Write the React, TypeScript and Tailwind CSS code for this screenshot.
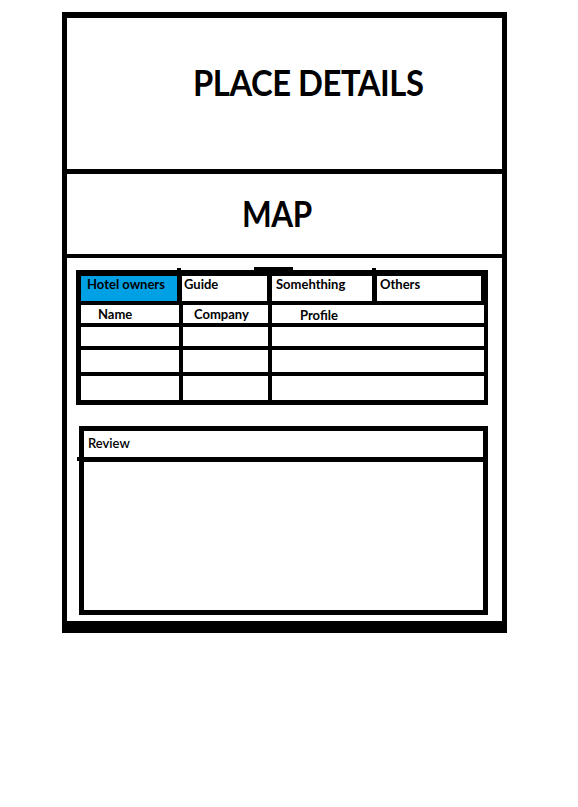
import React from 'react';

const tabs = [
  { label: 'Hotel owners', width: 'w-[96px]', pad: 'pl-[6px]', active: true },
  { label: 'Guide', width: 'w-[85px]', pad: 'pl-[2px]', active: false },
  { label: 'Somehthing', width: 'w-[100px]', pad: 'pl-[4px]', active: false },
  { label: 'Others', width: 'w-[104px]', pad: 'pl-[3px]', active: false },
];

// body rows of the owners table (empty in the sketch)
const rowHeights = ['h-[19px]', 'h-[22px]', 'h-[24px]'];

const App: React.FC = () => {
  return (
    <div className="min-h-[807px] bg-white pt-[12px] pl-[62px] font-['Lato','Open_Sans',sans-serif] text-black">
      <div className="w-[445px] border-x-[5px] border-t-[6px] border-b-[12px] border-black">
        {/* Header */}
        <div className="h-[156px] border-b-[5px] border-black pt-[46px] pl-[126px]">
          <h1 className="inline-block origin-left scale-x-[0.91] text-[36px] font-bold leading-none tracking-[-0.5px]">
            PLACE DETAILS
          </h1>
        </div>

        {/* Map */}
        <div className="h-[84px] border-b-[4px] border-black pt-[20px] pl-[175px]">
          <h2 className="inline-block origin-left scale-x-[0.85] text-[37px] font-bold leading-none tracking-[-0.5px]">
            MAP
          </h2>
        </div>

        <div className="pt-[12px] pl-[9px] pb-[6px]">
          {/* Table with tabs */}
          <div className="relative w-[412px] bg-black pt-[6px] pb-[5px] pl-[5px]">
            <span className="absolute left-[101px] top-[-2px] h-[4px] w-[4px] bg-black" />
            <span className="absolute left-[178px] top-[-3px] h-[4px] w-[39px] bg-black" />
            <span className="absolute left-[296px] top-[-2px] h-[4px] w-[4px] bg-black" />
            <div className="flex h-[25px] gap-[5px] pr-[7px]">
              {tabs.map((t) => (
                <div
                  key={t.label}
                  className={`${t.width} ${t.pad} pt-[2px] text-[13px] font-bold leading-none ${
                    t.active ? 'bg-[#00a0e4]' : 'bg-white'
                  }`}
                >
                  {t.label}
                </div>
              ))}
            </div>
            <div className="mt-[4px] flex h-[18px] gap-[4px] pr-[4px] text-[13px] font-bold leading-none">
              <div className="w-[98px] bg-white pl-[17px] pt-[3px]">Name</div>
              <div className="w-[85px] bg-white pl-[11px] pt-[3px]">Company</div>
              <div className="w-[212px] bg-white pl-[28px] pt-[4px]">Profile</div>
            </div>
            {rowHeights.map((h) => (
              <div key={h} className={`mt-[4px] flex ${h} gap-[4px] pr-[4px]`}>
                <div className="w-[98px] bg-white" />
                <div className="w-[85px] bg-white" />
                <div className="w-[212px] bg-white" />
              </div>
            ))}
          </div>

          {/* Review */}
          <div className="relative mt-[21px] ml-[3px] w-[409px] border-[5px] border-black">
            <div className="h-[26px] pl-[4px] pt-[6px] text-[13px] font-semibold leading-none">Review</div>
            <div className="h-[5px] bg-black" />
            <span className="absolute left-[-7px] top-[26px] h-[4px] w-[4px] bg-black" />
            <div className="h-[148px]" />
          </div>
        </div>
      </div>
    </div>
  );
};

export default App;
